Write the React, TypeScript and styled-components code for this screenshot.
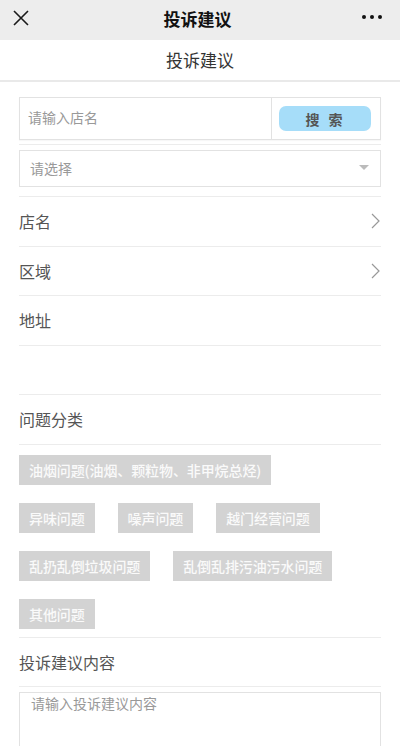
import styled, { createGlobalStyle } from 'styled-components';

const GlobalStyle = createGlobalStyle`
  html, body {
    margin: 0;
    padding: 0;
    background: #fff;
  }
  body {
    font-family: "Noto Sans CJK SC", "Noto Sans", sans-serif;
  }
  * {
    box-sizing: border-box;
  }
`;

const tags = [
    '油烟问题(油烟、颗粒物、非甲烷总烃)',
    '异味问题',
    '噪声问题',
    '越门经营问题',
    '乱扔乱倒垃圾问题',
    '乱倒乱排污油污水问题',
    '其他问题',
];

export default function App() {
    return (
        <Page>
            <GlobalStyle />
            <TopBar>
                <IconSlot>
                    <svg width="16" height="16" viewBox="0 0 16 16">
                        <path d="M1 1 L15 15 M15 1 L1 15" stroke="#1a1a1a" strokeWidth="1.6" fill="none" />
                    </svg>
                </IconSlot>
                <TopTitle>投诉建议</TopTitle>
                <IconSlot $right>
                    <svg width="20" height="6" viewBox="0 0 20 6">
                        <circle cx="2" cy="3" r="2" fill="#111" />
                        <circle cx="10" cy="3" r="2" fill="#111" />
                        <circle cx="18" cy="3" r="2" fill="#111" />
                    </svg>
                </IconSlot>
            </TopBar>
            <SubHeader>投诉建议</SubHeader>

            <Form>
                <SearchBox>
                    <SearchInput placeholder="请输入店名" />
                    <SearchCell>
                        <SearchButton>搜 索</SearchButton>
                    </SearchCell>
                </SearchBox>
                <Divider $top={4} />
                <SelectBox>
                    <Placeholder>请选择</Placeholder>
                    <Caret />
                </SelectBox>
                <Divider $top={9} />

                <Row>
                    <Label>店名</Label>
                    <Chevron />
                </Row>
                <Row>
                    <Label>区域</Label>
                    <Chevron />
                </Row>
                <Row>
                    <Label>地址</Label>
                </Row>
                <Row />
                <Row>
                    <Label>问题分类</Label>
                </Row>

                <TagList>
                    {tags.map((t) => (
                        <Tag key={t}>{t}</Tag>
                    ))}
                </TagList>

                <Row>
                    <Label>投诉建议内容</Label>
                </Row>
                <TextArea placeholder="请输入投诉建议内容" />
            </Form>
        </Page>
    );
}

function Chevron() {
    return (
        <svg width="9" height="16" viewBox="0 0 9 16">
            <path d="M1 1 L8 8 L1 15" stroke="#999" strokeWidth="1.2" fill="none" />
        </svg>
    );
}

const Page = styled.div`
    width: 400px;
    min-height: 746px;
    background: #fff;
`;

const TopBar = styled.div`
    height: 40px;
    background: #ededed;
    display: flex;
    align-items: center;
    justify-content: space-between;
    padding: 0 18px 0 12px;
`;

const IconSlot = styled.div<{ $right?: boolean }>`
    width: 30px;
    display: flex;
    justify-content: ${(p) => (p.$right ? 'flex-end' : 'flex-start')};
    align-items: center;
    margin-top: ${(p) => (p.$right ? '-6px' : '-5px')};
    margin-left: ${(p) => (p.$right ? '0' : '1px')};
`;

const TopTitle = styled.h1`
    margin: -4px 0 0;
    font-size: 17px;
    font-weight: bold;
    color: #111;
`;

const SubHeader = styled.div`
    height: 42px;
    display: flex;
    align-items: center;
    justify-content: center;
    font-size: 17px;
    color: #333;
    border-bottom: 2px solid #e9e9e9;
    padding-bottom: 2px;
`;

const Form = styled.div`
    padding: 15px 19px 0;
`;

const SearchBox = styled.div`
    height: 43px;
    display: flex;
    border: 1px solid #e2e2e2;
    box-shadow: 0 1px 1px rgba(0, 0, 0, 0.03);
`;

const SearchInput = styled.input`
    flex: 1;
    min-width: 0;
    border: none;
    outline: none;
    padding: 0 0 3px 8px;
    font-family: inherit;
    font-size: 14px;
    color: #333;
    &::placeholder {
        color: #999;
    }
`;

const SearchCell = styled.div`
    width: 109px;
    border-left: 1px solid #e2e2e2;
    display: flex;
    align-items: center;
    padding-left: 7px;
`;

const SearchButton = styled.button`
    width: 92px;
    height: 25px;
    border: none;
    border-radius: 7px;
    background: #a6ddf9;
    font-family: inherit;
    font-size: 14px;
    font-weight: bold;
    color: #555;
    padding: 0;
    letter-spacing: 2px;
    word-spacing: 2px;
`;

const Divider = styled.div<{ $top: number }>`
    height: 1px;
    background: #ececec;
    margin-top: ${(p) => p.$top}px;
`;

const SelectBox = styled.div`
    height: 37px;
    margin-top: 5px;
    border: 1px solid #e2e2e2;
    display: flex;
    align-items: center;
    justify-content: space-between;
    padding: 0 11px 2px 10px;
`;

const Placeholder = styled.span`
    font-size: 14px;
    color: #999;
`;

const Caret = styled.span`
    width: 0;
    height: 0;
    border-left: 5px solid transparent;
    border-right: 5px solid transparent;
    border-top: 5px solid #bbb;
`;

const Row = styled.div`
    height: 49.5px;
    border-bottom: 1px solid #ececec;
    display: flex;
    align-items: center;
    justify-content: space-between;
    padding-right: 1px;
`;

const Label = styled.span`
    font-size: 16px;
    color: #555;
`;

const TagList = styled.div`
    display: flex;
    flex-wrap: wrap;
    row-gap: 18px;
    padding: 10px 0 8px;
    border-bottom: 1px solid #ececec;
`;

const Tag = styled.span`
    height: 30px;
    line-height: 30px;
    padding: 0 10px;
    margin-right: 23px;
    background: #d3d3d3;
    color: #fafafa;
    font-size: 14px;
    font-weight: 500;
    white-space: nowrap;
    letter-spacing: -0.1px;
`;

const TextArea = styled.textarea`
    display: block;
    width: 100%;
    height: 100px;
    margin-top: 5px;
    border: 1px solid #e2e2e2;
    outline: none;
    resize: none;
    padding: 0 11px;
    font-family: inherit;
    font-size: 14px;
    &::placeholder {
        color: #999;
    }
`;
